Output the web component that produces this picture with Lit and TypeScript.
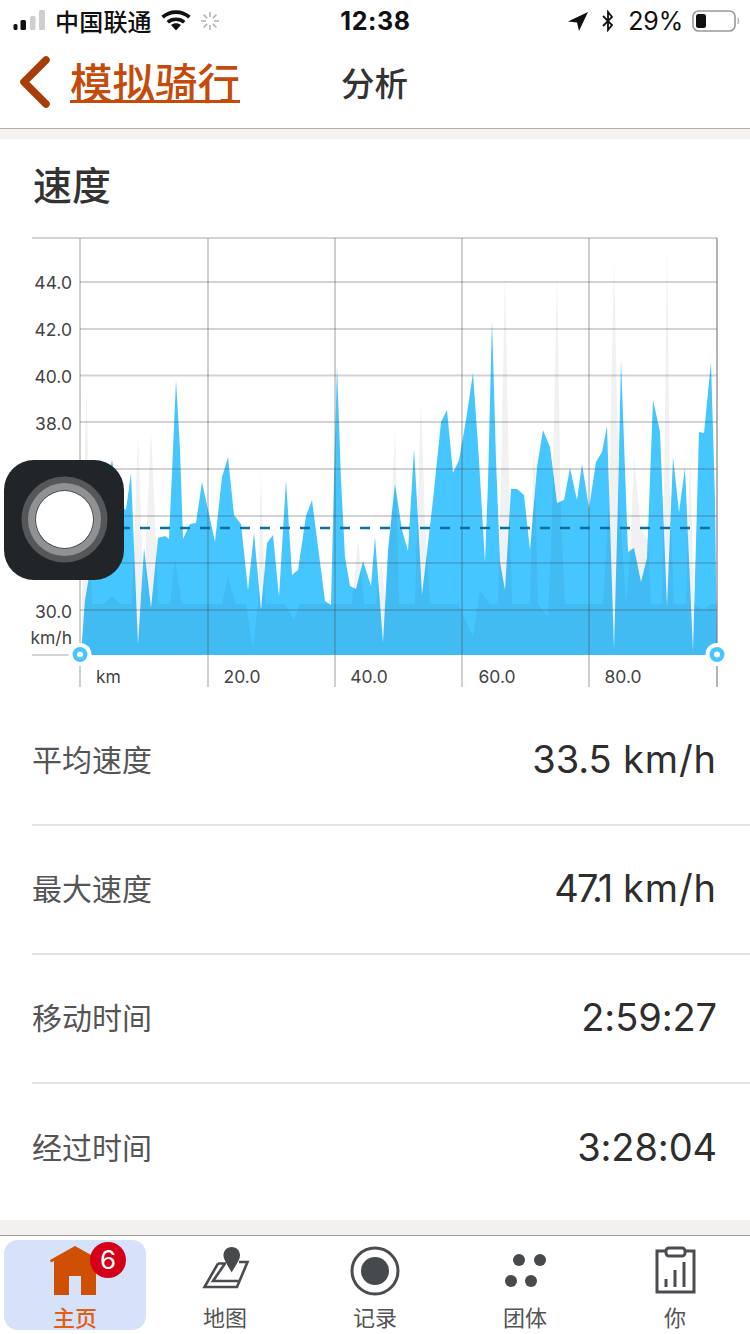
import { LitElement, html, css, svg } from "lit";
import { customElement } from "lit/decorators.js";

const pts = (a: number[][]) => a.map((p) => p.join(",")).join(" ");

const BLUE = [[81,655],[85,600],[92,560],[100,510],[112,460],[120,505],[126,510],[131,473],[138,645],[144,548],[151,608],[158,538],[165,536],[169,539],[173,450],[176,380],[180,450],[183,539],[190,524],[196,523],[202,482],[215,542],[222,477],[228,457],[234,515],[241,524],[248,590],[254,533],[261,610],[267,543],[273,535],[279,597],[286,480],[292,575],[298,570],[306,516],[312,500],[325,601],[331,605],[334,480],[337,366],[341,480],[345,557],[350,586],[356,589],[363,561],[371,586],[375,537],[383,643],[388,550],[395,484],[402,530],[408,551],[411,500],[414,449],[418,520],[422,595],[433,500],[441,422],[447,410],[453,473],[459,460],[466,420],[473,373],[479,460],[485,562],[488,483],[492,320],[496,460],[500,562],[505,590],[511,489],[517,489],[524,495],[530,550],[537,467],[543,430],[550,447],[557,503],[564,500],[570,468],[577,500],[582,464],[589,508],[596,462],[602,452],[607,426],[614,650],[618,500],[621,360],[628,552],[634,548],[641,582],[647,558],[653,400],[660,432],[667,607],[673,457],[679,512],[685,468],[693,652],[699,432],[704,433],[711,362],[715,500],[717,655]];

const GRAY = [[81,655],[84,500],[86.5,384],[89,500],[92,604],[104,604],[112,596],[120,604],[132,604],[135,520],[138,432],[141,520],[144,604],[147,520],[151,431],[155,520],[158,604],[170,604],[175,560],[182,604],[214,604],[222,604],[228,577],[236,604],[246,604],[253,650],[258,604],[261,470],[265,604],[285,604],[294,620],[300,604],[345,604],[352,604],[358,540],[364,604],[376,604],[381,560],[386,604],[392,500],[395,430],[399,604],[415,604],[418,500],[421,400],[425,520],[430,604],[445,604],[458,604],[473,637],[480,590],[490,604],[498,604],[501,480],[505,273],[509,480],[512,604],[530,604],[534,440],[538,604],[548,617],[552,520],[557,273],[561,520],[565,604],[603,604],[609,500],[614,260],[619,500],[626,604],[630,560],[634,455],[641,530],[648,540],[651,604],[662,604],[664,500],[667,243],[670,500],[674,604],[686,604],[690,450],[694,604],[704,610],[710,604],[717,604],[717,655]];

const Y_LINES = [282, 329, 375.5, 422, 469, 516, 563, 610];
const Y_LABELS: [string, number][] = [["44.0", 282], ["42.0", 329], ["40.0", 376], ["38.0", 423], ["30.0", 611]];
const X_LINES = [80, 208, 335, 462, 589, 717];
const X_LABELS: [string, number][] = [["20.0", 242], ["40.0", 369], ["60.0", 497], ["80.0", 623]];

const ROWS = [
  ["平均速度", "33.5", " km/h", ""],
  ["最大速度", "47.1", " km/h", "tight"],
  ["移动时间", "2:59:27", "", ""],
  ["经过时间", "3:28:04", "", ""],
];

const SPOKES = [0, 45, 90, 135, 180, 225, 270, 315];

@customElement("tab-icon")
class TabIcon extends LitElement {
  static properties = { name: { type: String } };
  name = "";
  static styles = css`
    :host { display: block; width: 60px; height: 52px; }
    svg { display: block; width: 60px; height: 52px; }
    .fill { fill: #474a4d; }
    .home { fill: #cf4f05; }
    .line { fill: none; stroke: #4a4c4f; stroke-width: 3; }
    .thin { fill: none; stroke: #4a4c4f; stroke-width: 2.6; stroke-linejoin: miter; }
    .bar { fill: none; stroke: #4a4c4f; stroke-width: 3; }
    .paper { fill: #fff; stroke: #4a4c4f; stroke-width: 3; }
  `;
  render() {
    switch (this.name) {
      case "home":
        return html`<svg viewBox="45 1244 60 52"><path class="home" d="M75 1246 L50 1260 L51 1262.5 L54 1261 V1295 H69 V1276 H81 V1295 H96 V1261 L99 1262.5 L100 1260 Z"/></svg>`;
      case "map":
        return html`<svg viewBox="195 1244 60 52">
          <path class="thin" d="M218 1263.5 L204.5 1287 H237 L247.5 1262 H239 M225 1263.5 L213 1281 H240 M218 1263.5 H226"/>
          <path class="fill" d="M231.7 1247 C237 1247 240 1251 240 1255.5 C240 1260 235 1266 231.7 1272.5 C228.4 1266 223.5 1260 223.5 1255.5 C223.5 1251 226.5 1247 231.7 1247 Z"/>
        </svg>`;
      case "rec":
        return html`<svg viewBox="345 1244 60 52">
          <circle class="line" cx="375" cy="1271" r="23"/>
          <circle class="fill" cx="375" cy="1271" r="14"/>
        </svg>`;
      case "team":
        return html`<svg viewBox="495 1244 60 52">
          <circle class="fill" cx="519" cy="1260" r="6"/>
          <circle class="fill" cx="540" cy="1260" r="6"/>
          <circle class="fill" cx="511" cy="1281" r="6"/>
          <circle class="fill" cx="531" cy="1281" r="6"/>
        </svg>`;
      default:
        return html`<svg viewBox="645 1244 60 52">
          <rect class="line" x="657" y="1251" width="37" height="41"/>
          <rect class="paper" x="666" y="1248" width="19" height="8" rx="3"/>
          <path class="bar" d="M666 1287 V1279 M675 1287 V1270 M684 1287 V1262"/>
        </svg>`;
    }
  }
}

@customElement("app-root")
class AppRoot extends LitElement {
  static styles = css`
    :host {
      display: block;
      width: 750px;
      height: 1334px;
      position: relative;
      overflow: hidden;
      background: #fff;
      font-family: "Noto Sans CJK SC", sans-serif;
      color: #333;
    }
    .page { display: flex; flex-direction: column; height: 1334px; }

    .status {
      height: 41px;
      display: flex;
      align-items: center;
      box-sizing: border-box;
      padding: 0 0 0 13px;
      position: relative;
      flex: none;
    }
    .status-left { display: flex; align-items: center; flex: 1; }
    .status-right { display: flex; align-items: center; flex: 1; justify-content: flex-end; padding-right: 10px; }
    .signal { display: block; width: 34px; height: 22px; margin-right: 8px; }
    .sig-on { fill: #111; }
    .sig-off { fill: #cfcfcf; }
    .carrier { font-size: 24px; font-weight: 500; color: #111; line-height: 32px; letter-spacing: 0.2px; }
    .wifi { display: block; width: 30px; height: 22px; margin-left: 9px; }
    .spin { display: block; width: 22px; height: 22px; margin-left: 8px; }
    .spoke { stroke: #b4b4b4; stroke-width: 1.6; }
    .time { font-family: "Inter", sans-serif; font-size: 25px; font-weight: 700; color: #111; width: 96px; text-align: center; letter-spacing: 0.6px; margin-left: -1px; margin-right: 1px; }
    .loc { display: block; width: 22px; height: 22px; margin-right: 12px; }
    .bt { display: block; width: 14px; height: 22px; margin-right: 13px; }
    .pct { font-family: "Inter", sans-serif; font-size: 25px; color: #111; margin-right: 9px; letter-spacing: -0.2px; }
    .batt { display: block; width: 48px; height: 24px; }

    .nav {
      height: 88px;
      flex: none;
      box-sizing: border-box;
      border-bottom: 1px solid #b5aca8;
      display: flex;
      align-items: center;
      padding-left: 17px;
      position: relative;
      padding-bottom: 4px;
    }
    .chev { display: block; width: 36px; height: 52px; margin-right: 17px; margin-top: -2px; }
    .chev path { fill: none; stroke: #a83e07; stroke-width: 7.5; stroke-linecap: round; stroke-linejoin: round; }
    .back {
      font-size: 42.5px;
      font-weight: 500;
      color: #c44b0b;
      line-height: 56px;
      border-bottom: 3px solid #c44b0b;
      height: 47px;
      overflow: visible;
      margin-top: -9px;
    }
    .nav-title {
      font-size: 33.5px;
      font-weight: 500;
      color: #333;
      line-height: 44px;
      margin-left: 101px;
      margin-top: -2px;
    }

    .band-top { height: 10px; flex: none; background: #f5f3f2; }
    .card { flex: 1; background: #fff; display: flex; flex-direction: column; min-height: 0; }
    .heading {
      font-size: 39px;
      font-weight: 500;
      color: #333;
      line-height: 50px;
      padding: 19px 0 0 33px;
      height: 72px;
      flex: none;
      box-sizing: content-box;
    }
    .chart { display: block; width: 750px; height: 466px; flex: none; }
    .grid { stroke: rgba(70, 70, 75, 0.24); stroke-width: 2; fill: none; }
    .gridv { stroke: rgba(70, 70, 75, 0.26); stroke-width: 2; fill: none; }
    .edge { stroke: rgba(70, 70, 75, 0.4); stroke-width: 2; fill: none; }
    .area { fill: #45c6ff; }
    .shade { fill: rgba(25, 25, 25, 0.06); }
    .dash { stroke: #0f6f9c; stroke-width: 2.4; stroke-dasharray: 10 10; fill: none; }
    .ring { fill: #fff; }
    .dot { fill: #45c6ff; }
    .lab { font-family: "Inter", sans-serif; font-size: 17.5px; fill: #444; }
    .end { text-anchor: end; }
    .mid { text-anchor: middle; }

    .rows { flex: 1; padding-top: 1px; }
    .row {
      height: 129px;
      box-sizing: border-box;
      margin-left: 32px;
      padding-right: 33px;
      padding-bottom: 4px;
      display: flex;
      align-items: center;
      justify-content: space-between;
      border-bottom: 2px solid #e3e3e3;
    }
    .row:last-child { border-bottom: none; }
    .row-label { font-size: 30px; color: #555; line-height: 40px; margin-top: -1px; }
    .row-value { font-family: "Inter", sans-serif; font-size: 38px; color: #2e2e2e; line-height: 44px; letter-spacing: -0.1px; white-space: pre; }
    .row-value.tight { letter-spacing: -1.8px; }
    .unit { letter-spacing: 0.9px; }

    .band-bottom { height: 15px; flex: none; background: #f3f1f0; }
    .tabs {
      height: 99px;
      flex: none;
      box-sizing: border-box;
      border-top: 1px solid #9c9c9c;
      display: flex;
      background: #fff;
    }
    .tab {
      flex: 1;
      position: relative;
      box-sizing: border-box;
      border: 4px solid transparent;
      border-radius: 18px;
      background-clip: padding-box;
      display: flex;
      flex-direction: column;
      align-items: center;
      padding-top: 4px;
    }
    .tab.active { background-color: #d6e2f9; }
    .tab-label { font-size: 22px; line-height: 30px; color: #555; margin-top: 5px; }
    .tab.active .tab-label { color: #e35d13; font-weight: 500; }
    .badge {
      position: absolute;
      left: 86px;
      top: 2px;
      width: 36px;
      height: 36px;
      border-radius: 50%;
      background: #d4001a;
      color: #fff;
      font-family: "Inter", sans-serif;
      font-size: 26px;
      line-height: 36px;
      text-align: center;
    }

    .assist {
      position: absolute;
      left: 4px;
      top: 460px;
      width: 120px;
      height: 120px;
      border-radius: 30px;
      background: #222527;
      display: flex;
      align-items: center;
      justify-content: center;
    }
    .assist svg { display: block; width: 120px; height: 120px; }
  `;

  private chart() {
    return html`<svg class="chart" viewBox="0 230 750 466">
      <polygon class="area" points=${pts(BLUE)}></polygon>
      <polygon class="shade" points=${pts(GRAY)}></polygon>
      ${svg`<line class="grid" x1="32" x2="717" y1="238" y2="238"></line>`}
      ${Y_LINES.map((y) => svg`<line class="grid" x1="80" x2="717" y1=${y} y2=${y}></line>`)}
      <line class="grid" x1="32" x2="80" y1="655" y2="655"></line>
      ${X_LINES.map((x) => svg`<line class=${x === 717 ? "edge" : "gridv"} x1=${x} x2=${x} y1="238" y2="687"></line>`)}
      <line class="dash" x1="80" x2="712" y1="528" y2="528"></line>
      ${Y_LABELS.map(([t, y]) => svg`<text class="lab end" x="72" y=${y + 6.5}>${t}</text>`)}
      <text class="lab end" x="72" y="644">km/h</text>
      <text class="lab" x="96" y="683">km</text>
      ${X_LABELS.map(([t, x]) => svg`<text class="lab mid" x=${x} y="683">${t}</text>`)}
      ${[80, 717].map((x) => svg`
        <circle class="ring" cx=${x} cy="654.5" r="11.5"></circle>
        <circle class="dot" cx=${x} cy="654.5" r="7.5"></circle>
        <circle class="ring" cx=${x} cy="654.5" r="3"></circle>`)}
    </svg>`;
  }

  render() {
    return html`
      <div class="page">
        <div class="status">
          <div class="status-left">
            <svg class="signal" viewBox="0 0 34 22">
              <rect class="sig-on" x="0.5" y="14" width="4" height="6" rx="1.5"></rect>
              <rect class="sig-on" x="7.5" y="10" width="5.5" height="10" rx="1.5"></rect>
              <rect class="sig-off" x="17" y="6" width="5.5" height="14" rx="1.5"></rect>
              <rect class="sig-off" x="26" y="0" width="6" height="20" rx="1.5"></rect>
            </svg>
            <span class="carrier">中国联通</span>
            <svg class="wifi" viewBox="0 0 30 22">
              <path d="M15 20.5 L10 15 C13 12.6 17 12.6 20 15 Z" fill="#111"></path>
              <path d="M6.8 12.2 C11 8.2 19 8.2 23.2 12.2" fill="none" stroke="#111" stroke-width="3.6"></path>
              <path d="M1.6 7.2 C9 0.4 21 0.4 28.4 7.2" fill="none" stroke="#111" stroke-width="3.6"></path>
            </svg>
            <svg class="spin" viewBox="0 0 22 22">
              ${SPOKES.map((a) => svg`<line class="spoke" x1="11" y1="2" x2="11" y2="7" transform="rotate(${a} 11 11)"></line>`)}
            </svg>
          </div>
          <span class="time">12:38</span>
          <div class="status-right">
            <svg class="loc" viewBox="0 0 22 22"><path d="M21 2 L1 11.5 L10 12.5 L12 21 Z" fill="#111"></path></svg>
            <svg class="bt" viewBox="0 0 14 22">
              <path d="M2 6 L11 15 L7 20 V2 L11 7 L2 16" fill="none" stroke="#111" stroke-width="1.8"></path>
            </svg>
            <span class="pct">29%</span>
            <svg class="batt" viewBox="0 0 48 24">
              <rect x="1" y="2" width="42" height="20" rx="5.5" fill="none" stroke="#9a9a9a" stroke-width="1.6"></rect>
              <rect x="4" y="5" width="10" height="14" rx="2.5" fill="#111"></rect>
              <path d="M45.5 9 C46.8 10 46.8 14 45.5 15" fill="none" stroke="#b5b5b5" stroke-width="1.5"></path>
            </svg>
          </div>
        </div>

        <div class="nav">
          <svg class="chev" viewBox="0 0 36 52"><path d="M29 4 L7 26 L29 48"></path></svg>
          <span class="back">模拟骑行</span>
          <span class="nav-title">分析</span>
        </div>

        <div class="band-top"></div>

        <div class="card">
          <div class="heading">速度</div>
          ${this.chart()}
          <div class="rows">
            ${ROWS.map(([l, v, u, c]) => html`<div class="row"><span class="row-label">${l}</span><span class="row-value ${c}">${v}<span class="unit">${u}</span></span></div>`)}
          </div>
        </div>

        <div class="band-bottom"></div>

        <div class="tabs">
          <div class="tab active"><tab-icon name="home"></tab-icon><span class="tab-label">主页</span><span class="badge">6</span></div>
          <div class="tab"><tab-icon name="map"></tab-icon><span class="tab-label">地图</span></div>
          <div class="tab"><tab-icon name="rec"></tab-icon><span class="tab-label">记录</span></div>
          <div class="tab"><tab-icon name="team"></tab-icon><span class="tab-label">团体</span></div>
          <div class="tab"><tab-icon name="you"></tab-icon><span class="tab-label">你</span></div>
        </div>
      </div>

      <div class="assist">
        <svg viewBox="0 0 120 120">
          <circle cx="60.5" cy="59.5" r="43" fill="#55585a"></circle>
          <circle cx="60.5" cy="59.5" r="36.5" fill="#8f9192"></circle>
          <circle cx="60.5" cy="59.5" r="29.3" fill="#3a3c3e"></circle>
          <circle cx="60.5" cy="59.5" r="28.5" fill="#fff"></circle>
        </svg>
      </div>
    `;
  }
}
